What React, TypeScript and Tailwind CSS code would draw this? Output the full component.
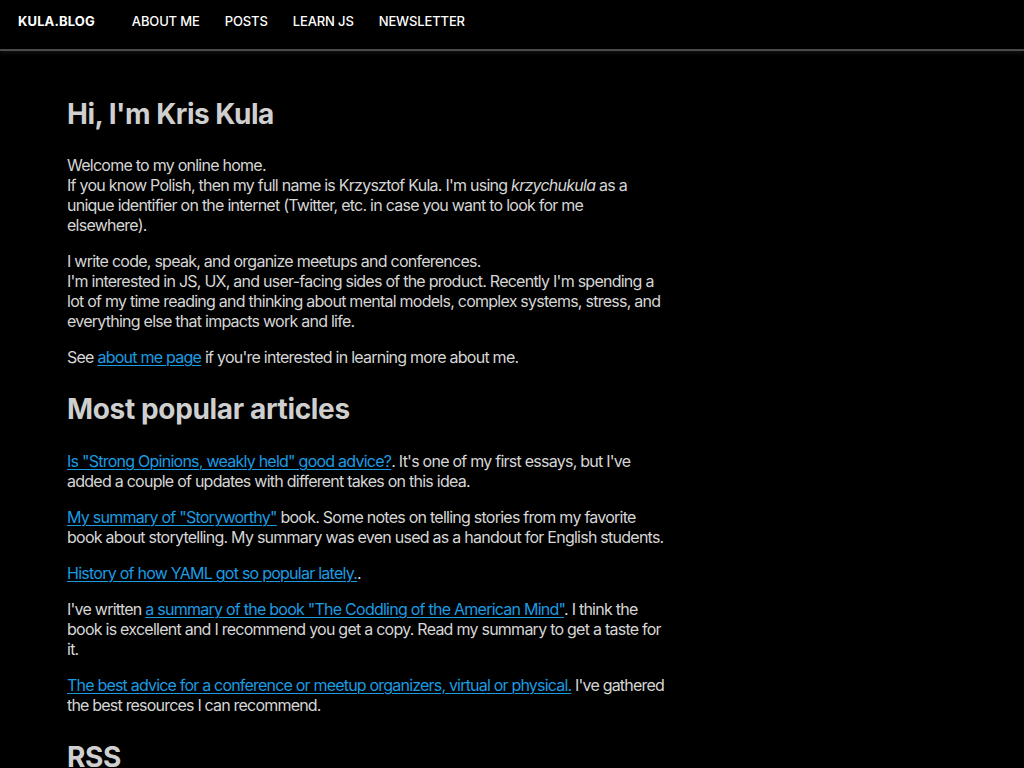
const navItems = ['ABOUT ME', 'POSTS', 'LEARN JS', 'NEWSLETTER'];

const font = { fontFamily: 'Inter, "Noto Sans", sans-serif' };

function A({ children }: { children: React.ReactNode }) {
  return (
    <a href="#" className="text-[#1b9be0] underline underline-offset-2 decoration-1">
      {children}
    </a>
  );
}

export default function App() {
  return (
    <div className="min-h-screen bg-black text-[#d6d6d6]" style={font}>
      <nav className="h-[51px] flex items-center px-[18px] border-b-2 border-[#4a4a4a] shadow-[0_2px_4px_rgba(255,255,255,0.08)]">
        <div className="flex items-center pb-[6px] text-[13px] text-white">
          <span className="font-bold tracking-[0.01em] mr-[37px]">KULA.BLOG</span>
          <div className="flex gap-[25px] font-medium tracking-[-0.01em]">
            {navItems.map((item) => (
              <a key={item} href="#">
                {item}
              </a>
            ))}
          </div>
        </div>
      </nav>

      <main className="pl-[67px] w-[666px] text-[16px] leading-[20px] tracking-[-0.75px]">
        <h1 className="mt-[46px] text-[28px] leading-[34px] font-bold text-[#cfcfcf] tracking-[-0.5px]">Hi, I'm Kris Kula</h1>

        <p className="mt-[24px]">
          Welcome to my online home.
          <br />
          If you know Polish, then my full name is Krzysztof Kula. I'm using <em>krzychukula</em> as a unique
          identifier on the internet (Twitter, etc. in case you want to look for me elsewhere).
        </p>
        <p className="mt-[16px]">
          I write code, speak, and organize meetups and conferences.
          <br />
          I'm interested in JS, UX, and user-facing sides of the product. Recently I'm spending a lot of my
          time reading and thinking about mental models, complex systems, stress, and everything else that
          impacts work and life.
        </p>
        <p className="mt-[16px]">
          See <A>about me page</A> if you're interested in learning more about me.
        </p>

        <h2 className="mt-[25px] text-[28px] leading-[34px] font-bold text-[#cfcfcf] tracking-[-0.35px]">Most popular articles</h2>

        <p className="mt-[25px]">
          <A>Is "Strong Opinions, weakly held" good advice?</A>. It's one of my first essays, but I've added a
          couple of updates with different takes on this idea.
        </p>
        <p className="mt-[16px]">
          <A>My summary of "Storyworthy"</A> book. Some notes on telling stories from my favorite book about
          storytelling. My summary was even used as a handout for English students.
        </p>
        <p className="mt-[16px]">
          <A>History of how YAML got so popular lately.</A>.
        </p>
        <p className="mt-[16px]">
          I've written <A>a summary of the book "The Coddling of the American Mind"</A>. I think the book is
          excellent and I recommend you get a copy. Read my summary to get a taste for it.
        </p>
        <p className="mt-[16px] tracking-[-0.8px]">
          <A>The best advice for a conference or meetup organizers, virtual or physical.</A> I've gathered the
          best resources I can recommend.
        </p>

        <h2 className="mt-[25px] text-[28px] leading-[34px] font-bold text-[#cfcfcf] tracking-[-0.35px]">RSS</h2>
        <p className="mt-[16px] pb-10">
          You can subscribe to the <A>RSS feed</A> to get new posts.
        </p>
      </main>
    </div>
  );
}
